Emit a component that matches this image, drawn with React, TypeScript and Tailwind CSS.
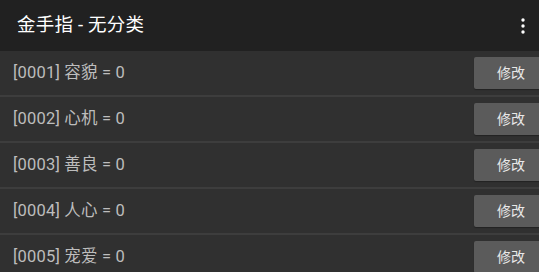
import React from 'react';

const CHEATS = [
  { id: '0001', name: '容貌', value: 0 },
  { id: '0002', name: '心机', value: 0 },
  { id: '0003', name: '善良', value: 0 },
  { id: '0004', name: '人心', value: 0 },
  { id: '0005', name: '宠爱', value: 0 },
];

const font = { fontFamily: 'Roboto, "Noto Sans CJK SC", sans-serif' };

export default function App() {
  return (
    <div className="w-[539px] h-[272px] overflow-hidden bg-[#303030]" style={font}>
      {/* Toolbar */}
      <div className="h-[51px] bg-[#212121] flex items-center pl-[17px] pr-[12px]">
        <h1 className="flex-1 text-[18.5px] text-white leading-none tracking-[0.2px]">金手指 - 无分类</h1>
        <button className="w-[8px] h-[20px] flex items-center justify-center">
          <svg width="4" height="16" viewBox="0 0 4 16">
            <circle cx="2" cy="2" r="1.7" fill="#fff" />
            <circle cx="2" cy="8" r="1.7" fill="#fff" />
            <circle cx="2" cy="14" r="1.7" fill="#fff" />
          </svg>
        </button>
      </div>

      {/* List */}
      <div>
        {CHEATS.map((c, i) => (
          <div key={c.id}>
            {i > 0 && <div className="h-[2px] bg-[#3d3d3d]" />}
            <div className="h-[44px] flex items-center pl-[13px]">
              <span className="flex-1 text-[16.5px] text-[#bdbdbd] tracking-[0.2px]">
                [{c.id}] {c.name} = {c.value}
              </span>
              <button className="w-[74px] h-[32px] mr-[-9px] shrink-0 rounded-[2px] bg-[#5b5b5b] text-[14px] text-[#e8e8e8] shadow-[0_1px_1px_rgba(0,0,0,0.3)]">
                修改
              </button>
            </div>
          </div>
        ))}
      </div>
    </div>
  );
}
